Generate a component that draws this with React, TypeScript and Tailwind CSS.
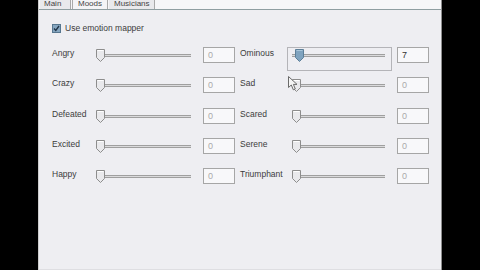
import React from 'react';

const font = { fontFamily: '"Liberation Sans", Arial, sans-serif' };

const leftMoods = [
  { name: 'Angry', value: 0 },
  { name: 'Crazy', value: 0 },
  { name: 'Defeated', value: 0 },
  { name: 'Excited', value: 0 },
  { name: 'Happy', value: 0 },
];

const rightMoods = [
  { name: 'Ominous', value: 7, focused: true },
  { name: 'Sad', value: 0 },
  { name: 'Scared', value: 0 },
  { name: 'Serene', value: 0 },
  { name: 'Triumphant', value: 0 },
];

const Thumb = ({ active }: { active?: boolean }) => (
  <svg width="9" height="13" viewBox="0 0 9 13" className="block">
    <path
      d="M0.5 0.5 H8.5 V8.5 L4.5 12.5 L0.5 8.5 Z"
      fill={active ? '#7fa3bf' : '#e9e9ec'}
      stroke={active ? '#5d7f98' : '#8d8d8d'}
      strokeWidth="1"
    />
    <path d="M1.5 1.5 H7.5" stroke={active ? '#a9c6da' : '#ffffff'} strokeWidth="1" />
  </svg>
);

const Slider = ({ value, active, width }: { value: number; active?: boolean; width: number }) => (
  <div className="relative h-[16px] pt-[7px]" style={{ width }}>
    <div className="h-[3px] border-t border-b border-[#9f9f9f] bg-[#dadadc]" />
    <div className="absolute top-[2px]" style={{ left: Math.round(value * 0.45) }}>
      <Thumb active={active} />
    </div>
  </div>
);

const ValueBox = ({ value }: { value: number }) => (
  <div
    className={`h-[16px] w-[32px] border border-[#a6a6a6] bg-[#f8f8fa] pl-[4px] text-[9px] leading-[14px] ${
      value ? 'text-[#333333]' : 'text-[#ababab]'
    }`}
  >
    {value}
  </div>
);

const App: React.FC = () => {
  return (
    <div className="relative flex h-[270px] w-[480px] overflow-hidden bg-black" style={font}>
      <div className="w-[38px] shrink-0" />

      {/* window */}
      <div className="flex h-full w-[404px] shrink-0 flex-col border-l border-r border-l-[#cdcdcd] border-r-[#8e8e8e] bg-[#f6f6f8]">
        {/* tabs */}
        <div className="flex h-[9px] shrink-0 items-end gap-[1px] overflow-hidden pl-[1px] text-[8px] text-[#444444]">
          <div className="h-[9px] w-[31px] border-r border-[#a9a9a9] bg-[#e9e9ec] pl-[4px] leading-[8px]">Main</div>
          <div className="h-[9px] w-[36px] border-l border-r border-[#a9a9a9] bg-[#f4f4f6] pl-[5px] leading-[8px]">Moods</div>
          <div className="h-[9px] w-[46px] border-r border-[#a9a9a9] bg-[#e9e9ec] pl-[5px] leading-[8px]">Musicians</div>
        </div>

        {/* panel */}
        <div className="flex flex-1 flex-col border-t border-b border-t-[#8f9ea1] border-b-[#dedee2] bg-[#eeeef2] pl-[13px] pt-[14px] text-[8.5px] text-[#3c3c3c]">
          <div className="flex h-[9px] items-center gap-[4px]">
            <svg width="9" height="9" viewBox="0 0 9 9" className="block">
              <rect x="0.5" y="0.5" width="8" height="8" fill="#86a6c0" stroke="#56768f" />
              <path d="M2 4.5 L3.8 6.5 L7 2" fill="none" stroke="#1f3347" strokeWidth="1.3" />
            </svg>
            <span className="leading-[9px]">Use emotion mapper</span>
          </div>

          <div className="mt-[14px] flex">
            <div className="flex flex-col gap-[14.25px]">
              {leftMoods.map((m) => (
                <div key={m.name} className="flex h-[16px] items-start">
                  <span className="w-[44px] leading-[12px]">{m.name}</span>
                  <Slider value={m.value} width={95} />
                  <div className="ml-[12px]">
                    <ValueBox value={m.value} />
                  </div>
                </div>
              ))}
            </div>

            <div className="ml-[5px] flex flex-col gap-[14.25px]">
              {rightMoods.map((m) => (
                <div key={m.name} className="flex h-[16px] items-start">
                  <span className="w-[48px] leading-[12px]">{m.name}</span>
                  <div className="relative w-[104px] pl-[4px]">
                    {m.focused && (
                      <div className="absolute -left-[1px] top-0 h-[24px] w-[105px] border border-[#b4b4b8]" />
                    )}
                    <Slider value={m.value} active={m.focused} width={93} />
                  </div>
                  <div className="ml-[5px]">
                    <ValueBox value={m.value} />
                  </div>
                </div>
              ))}
            </div>
          </div>
        </div>
      </div>

      {/* mouse cursor */}
      <svg width="11" height="15" viewBox="0 0 11 15" className="absolute left-[288px] top-[76px]">
        <path
          d="M0.5 0.5 L0.5 11.5 L3.3 9 L5.3 13.8 L7.3 13 L5.4 8.4 L9 8.4 Z"
          fill="#f4f4f4"
          stroke="#6a6a6a"
          strokeWidth="1"
        />
      </svg>
    </div>
  );
};

export default App;
